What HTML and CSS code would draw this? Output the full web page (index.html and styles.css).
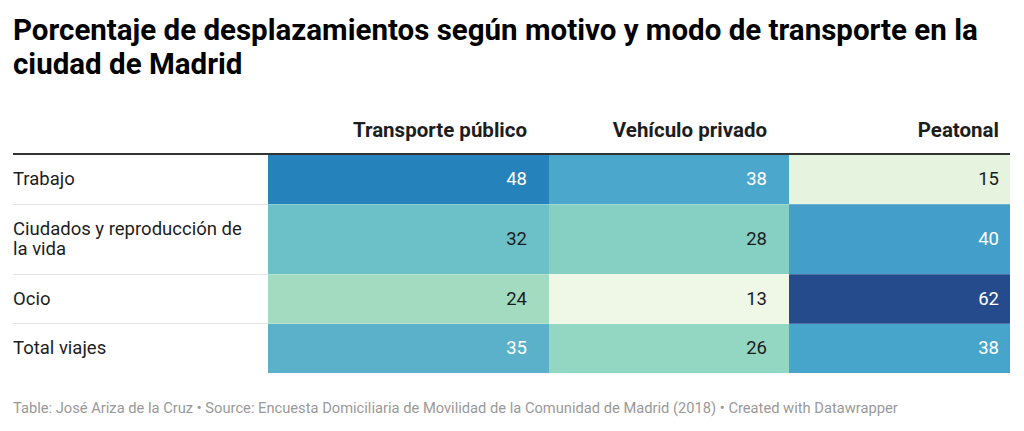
FILE: index.html
```html
<!DOCTYPE html>
<html lang="es">
<head>
<meta charset="utf-8">
<link rel="stylesheet" href="styles.css">
</head>
<body>
<div class="chart">
  <h1 class="title">Porcentaje de desplazamientos según motivo y modo de transporte en la ciudad de Madrid</h1>
  <table class="tbl">
    <thead>
      <tr>
        <th class="lab"></th>
        <th class="c1">Transporte público</th>
        <th class="c2">Vehículo privado</th>
        <th class="c3">Peatonal</th>
      </tr>
    </thead>
    <tbody>
      <tr>
        <td class="lab">Trabajo</td>
        <td class="c1 v light" style="background:#2682ba">48</td>
        <td class="c2 v light" style="background:#4ba8cc">38</td>
        <td class="c3 v" style="background:#e6f4df">15</td>
      </tr>
      <tr>
        <td class="lab">Ciudados y reproducción de la vida</td>
        <td class="c1 v" style="background:#6cc0c8">32</td>
        <td class="c2 v" style="background:#86cfc3">28</td>
        <td class="c3 v light" style="background:#439fc9">40</td>
      </tr>
      <tr>
        <td class="lab">Ocio</td>
        <td class="c1 v" style="background:#a2dbc0">24</td>
        <td class="c2 v" style="background:#eff8e6">13</td>
        <td class="c3 v light" style="background:#254b8c">62</td>
      </tr>
      <tr>
        <td class="lab">Total viajes</td>
        <td class="c1 v light" style="background:#5ab1c9">35</td>
        <td class="c2 v" style="background:#93d6c1">26</td>
        <td class="c3 v light" style="background:#47a5cb">38</td>
      </tr>
    </tbody>
  </table>
  <p class="foot">Table: José Ariza de la Cruz • Source: Encuesta Domiciliaria de Movilidad de la Comunidad de Madrid (2018) • Created with Datawrapper</p>
</div>
</body>
</html>
```
FILE: styles.css
```css
html, body {
  margin: 0;
  padding: 0;
  background: #ffffff;
}
body {
  font-family: Roboto, "Liberation Sans", sans-serif;
  color: #1d1d1d;
}
.chart {
  padding: 13px 14px 0 13px;
}
.title {
  margin: 0;
  font-size: 29.5px;
  line-height: 34px;
  font-weight: 700;
  color: #000;
}
.tbl {
  margin-top: 37px;
  width: 997px;
  border-collapse: collapse;
  table-layout: fixed;
}
.tbl th,
.tbl td {
  box-sizing: border-box;
}
.tbl th {
  font-size: 20.5px;
  font-weight: 700;
  text-align: right;
  padding: 0 22px 11px 0;
  line-height: 24px;
  color: #1d1d1d;
  border-bottom: 2px solid #333;
}
.tbl th.lab { width: 255px; padding-right: 0; }
.tbl th.c1 { width: 281px; }
.tbl th.c2 { width: 240px; }
.tbl th.c3 { width: 221px; padding-right: 11px; }
.tbl td {
  font-size: 18.5px;
  line-height: 20.5px;
  padding: 14px 22px 14px 0;
  border-bottom: 1px solid #e4e4e4;
  vertical-align: middle;
}
.tbl td.lab {
  text-align: left;
  padding-right: 8px;
  color: #1d1d1d;
}
.tbl td.v {
  text-align: right;
  color: #1d1d1d;
  border-bottom-color: rgba(255, 255, 255, 0.22);
}
.tbl td.c3 { padding-right: 11px; }
.tbl td.light { color: #ffffff; }
.tbl tbody tr:last-child td.lab { border-bottom-color: transparent; }
.foot {
  margin: 26px 0 0 0;
  font-size: 14.7px;
  line-height: 17px;
  color: #999999;
}
```
